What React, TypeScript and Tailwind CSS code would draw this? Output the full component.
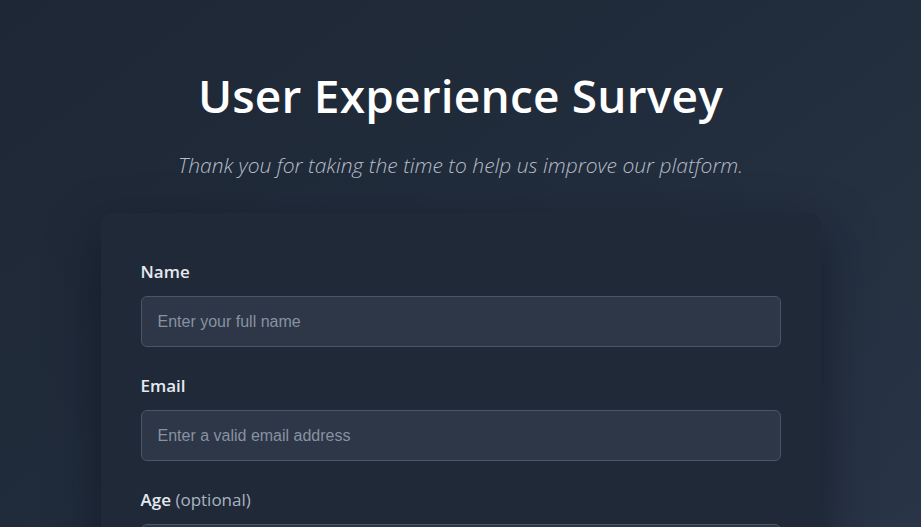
import { useState } from 'react';

const fields = [
  { id: 'name', label: 'Name', placeholder: 'Enter your full name', type: 'text' },
  { id: 'email', label: 'Email', placeholder: 'Enter a valid email address', type: 'email' },
  { id: 'age', label: 'Age', optional: true, placeholder: 'Enter your age', type: 'number' },
];

export default function App() {
  const [values, setValues] = useState<Record<string, string>>({});

  return (
    <div
      className="min-h-screen w-full overflow-hidden bg-gradient-to-br from-[#1d2735] via-[#222d3d] to-[#2b3649] px-4 pt-[65px] pb-10"
      style={{ fontFamily: '"Open Sans", sans-serif' }}
    >
      {/* Header */}
      <div className="text-center">
        <h1 className="text-[46px] font-semibold leading-[60px] tracking-[0.2px] text-white">
          User Experience Survey
        </h1>
        <p className="mt-[26px] text-[21px] italic font-light leading-7 text-[#b4bcc8]">
          Thank you for taking the time to help us improve our platform.
        </p>
      </div>

      {/* Card */}
      <div className="mx-auto mt-[34px] w-[720px] rounded-xl bg-[#1f2937] px-10 pt-12 pb-10 shadow-[0_20px_50px_rgba(10,15,25,0.55)]">
        {fields.map((f) => (
          <div key={f.id} className="mb-7">
            <label htmlFor={f.id} className="mb-[13px] block text-[17px] font-semibold leading-[22px] text-[#e5e9f0]">
              {f.label}
              {f.optional && <span className="font-normal text-[#aab3c0]"> (optional)</span>}
            </label>
            <input
              id={f.id}
              type={f.type}
              value={values[f.id] ?? ''}
              onChange={(e) => setValues({ ...values, [f.id]: e.target.value })}
              placeholder={f.placeholder}
              className="block h-[51px] w-full rounded-md border border-[#4a5568] bg-[#2d3748] px-4 text-base text-[#e5e9f0] placeholder:text-[#8892a0] focus:outline-none"
              style={{ fontFamily: '"Liberation Sans", Arial, sans-serif' }}
            />
          </div>
        ))}
      </div>
    </div>
  );
}
